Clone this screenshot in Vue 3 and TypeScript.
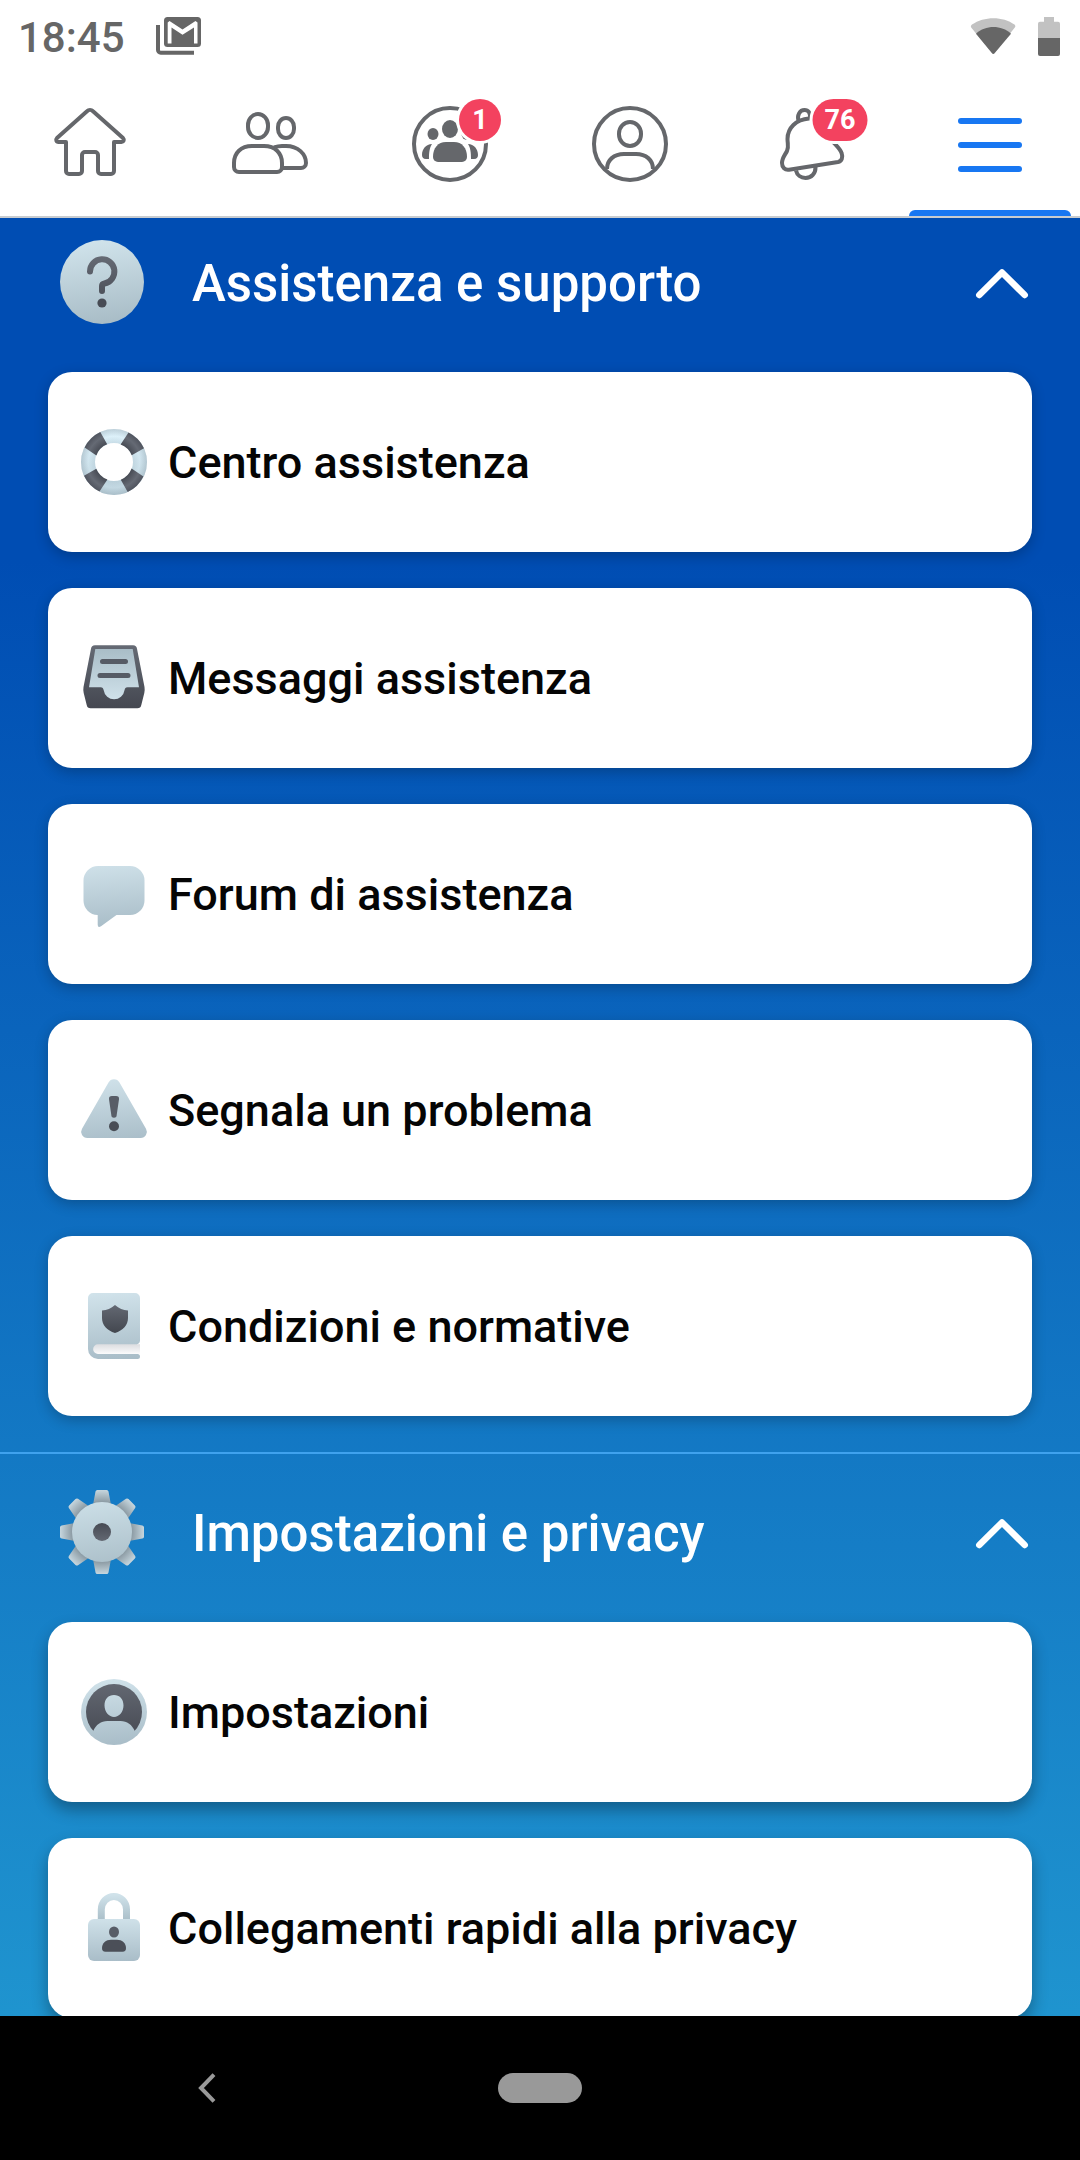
<script setup lang="ts">
import { ref } from 'vue'

interface MenuItem {
  label: string
  icon: string
}

interface MenuSection {
  title: string
  icon: string
  open: boolean
  items: MenuItem[]
}

interface Tab {
  name: string
  icon: string
  badge?: number
}

const tabs: Tab[] = [
  {
    name: 'Home',
    icon: '<path d="M24 46v29a3 3 0 0 0 3 3h10a3 3 0 0 0 3-3V59a3 3 0 0 1 3-3h10a3 3 0 0 1 3 3v16a3 3 0 0 0 3 3h10a3 3 0 0 0 3-3V46h7.500c2.200 0 3-2.400 1.500-4L51 15.200a4.300 4.300 0 0 0-6 0L15 42c-1.500 1.600-.7 4 1.500 4z"/>',
  },
  {
    name: 'Amici',
    icon: '<rect x="26" y="18" width="20" height="24" rx="10" ry="11"/><path d="M12 67c0-10 7-17 18-17h12c11 0 18 7 18 17v4a5 5 0 0 1-5 5H17a5 5 0 0 1-5-5z"/><rect x="56" y="22" width="16" height="20" rx="8" ry="9"/><path d="M52 51.500c3-1.100 5-1.500 8-1.500h4c12 0 20 8 20 17a5 5 0 0 1-5 5H61"/>',
  },
  {
    name: 'Gruppi',
    badge: 1,
    icon: '<circle cx="48" cy="48" r="36"/><g fill="currentColor" stroke="none"><ellipse cx="48" cy="33" rx="8" ry="9"/><ellipse cx="31" cy="38" rx="5.500" ry="6"/><ellipse cx="65" cy="38" rx="5.500" ry="6"/><path d="M31 61c0-9 5-15 13-15h8c8 0 13 6 13 15a5 5 0 0 1-5 5H36a5 5 0 0 1-5-5z"/><path d="M30 48c-2.500 4-3 8-3 15h-3c-3 0-4-2-4-4 0-6 4-11 10-11z"/><path d="M66 48c2.500 4 3 8 3 15h3c3 0 4-2 4-4 0-6-4-11-10-11z"/></g>',
  },
  {
    name: 'Profilo',
    icon: '<circle cx="48" cy="48" r="36"/><rect x="37" y="26" width="22" height="24" rx="11" ry="11.500"/><path d="M25 73c0-9 7-15 17-15h12c10 0 17 6 17 15"/>',
  },
  {
    name: 'Notifiche',
    badge: 76,
    icon: '<path d="M36.500 24.500c-1.500-5 1-10.500 6-10.500 4 0 6 3 5.500 8"/><path d="M47 22.500C34 23.500 25.500 32 25.500 43c0 5 1.500 8-.5 12s-5 7-5 12c0 4.500 3 7.300 7 6.700l49-7.700c4-.8 5-5 3.700-8.500C78.300 53 75 50.500 72 47c-3-4-2-9-4-13-3-8-11-12-21-11.500z"/><path d="M34 74.500c1 4.500 5 7.500 9.500 7.500 6 0 10.200-4.500 10-11"/>',
  },
  {
    name: 'Menu',
    icon: '<g fill="currentColor" stroke="none"><rect x="16" y="22" width="64" height="6" rx="3"/><rect x="16" y="46" width="64" height="6" rx="3"/><rect x="16" y="70" width="64" height="6" rx="3"/></g>',
  },
]

const activeTab = ref('Menu')

const tooth = '<path d="M33 15l2.500-13.400A2 2 0 0 1 37.500 0h9a2 2 0 0 1 2 1.600L51 15z"/>'
const teeth = [0, 45, 90, 135, 180, 225, 270, 315]
  .map((a) => `<g transform="rotate(${a} 42 42)">${tooth}</g>`)
  .join('')

const ringBand = '<path d="M19.300 3A33 33 0 0 0 3.600 18.500L15.400 26.400A19 19 0 0 1 26.200 15.300z"/>'
const ringBands = [0, 90, 180, 270]
  .map((a) => `<g transform="rotate(${a} 33 33)">${ringBand}</g>`)
  .join('')

const sections = ref<MenuSection[]>([
  {
    title: 'Assistenza e supporto',
    open: true,
    icon: '<circle cx="42" cy="42" r="42" fill="url(#light84)"/><path d="M30 31.500A12.200 12.200 0 1 1 44.500 43.500Q42 44 42 46V51" fill="none" stroke="url(#dark84)" stroke-width="6" stroke-linecap="round" stroke-linejoin="round"/><circle cx="42" cy="63" r="4.600" fill="#474b54"/>',
    items: [
      {
        label: 'Centro assistenza',
        icon: `<circle cx="33" cy="33" r="26" fill="none" stroke="url(#ringLight)" stroke-width="14"/><circle cx="33" cy="33" r="26" fill="none" stroke="url(#ringShade)" stroke-width="14"/><g fill="url(#ringDark)">${ringBands}</g>`,
      },
      {
        label: 'Messaggi assistenza',
        icon: '<path d="M14 0.300h38a4 4 0 0 1 4 3.500L63.500 42q.5 3-.2 6l-3 12a4 4 0 0 1-4 3.300H9.700a4 4 0 0 1-4-3.300l-3-12q-.7-3-.2-6L10 3.800a4 4 0 0 1 4-3.500z" fill="url(#dark66)"/><path d="M14.300 4h37.400L58 42.300H46.500c-2 0-2.500 1-3 3a10.500 10.500 0 0 1-20.800 0c-.5-2-1-3-3-3H8z" fill="url(#lightUp)"/><path d="M21.500 16.500h23M19 30.500h28" stroke="#565b65" stroke-width="5" stroke-linecap="round"/>',
      },
      {
        label: 'Forum di assistenza',
        icon: '<path d="M17 5h32a14.500 14.500 0 0 1 14.500 14.500v20A14.500 14.500 0 0 1 49 54H35.500L20 65.300q-3.300 1.700-3.300-1.600V54A14.500 14.500 0 0 1 2.500 39.500v-20A14.500 14.500 0 0 1 17 5z" fill="url(#light66)"/>',
      },
      {
        label: 'Segnala un problema',
        icon: '<path d="M27.500 5.500a6.200 6.200 0 0 1 11 0L65 51.700a6.200 6.200 0 0 1-5.500 9.300h-53A6.200 6.200 0 0 1 1 51.700z" fill="url(#light66)"/><path d="M31 19h4a3 3 0 0 1 3 3.300L35.700 38a2.600 2.600 0 0 1-5.400 0L28 22.300A3 3 0 0 1 31 19z" fill="#585d67"/><circle cx="33" cy="49.300" r="5" fill="#494d56"/>',
      },
      {
        label: 'Condizioni e normative',
        icon: '<path d="M12 0h42a5 5 0 0 1 5 5v43a4 4 0 0 1-3 3.500V61h.5a2.500 2.500 0 0 1 0 5H17A10 10 0 0 1 7 56V5a5 5 0 0 1 5-5z" fill="url(#light66)"/><path d="M17 51.300h42V61H17a4.850 4.850 0 0 1 0-9.700z" fill="url(#pages)"/><path d="M34 12c4 3.500 8 5 13 5.500V25c0 7-5 12.500-13 15-8-2.500-13-8-13-15v-7.500c5-.5 9-2 13-5.500z" fill="url(#shield)"/>',
      },
    ],
  },
  {
    title: 'Impostazioni e privacy',
    open: true,
    icon: `<g fill="url(#toothShade)">${teeth}</g><circle cx="42" cy="42" r="30" fill="url(#light84)"/><circle cx="42" cy="42" r="9" fill="url(#hole)"/>`,
    items: [
      {
        label: 'Impostazioni',
        icon: '<circle cx="33" cy="33" r="33" fill="url(#light66)"/><circle cx="33" cy="33" r="28" fill="url(#dark66)"/><path d="M33 16c5.500 0 9.500 4 9.500 10.500S38 38 33 38s-9.500-5-9.500-11.500S27.500 16 33 16zM12 52.500C15 45.500 20 42 26.500 42h13C46 42 51 45.500 54 52.500 49 59 41 62 33 62S17 59 12 52.500z" fill="url(#light66)"/>',
      },
      {
        label: 'Collegamenti rapidi alla privacy',
        icon: '<path d="M20.300 25V14.500a12.600 13 0 0 1 25.200 0V25" fill="none" stroke="url(#shackle)" stroke-width="7"/><rect x="7" y="24" width="52" height="42" rx="6" fill="url(#lockBody)"/><ellipse cx="33" cy="37" rx="5" ry="5.500" fill="#585d67"/><path d="M21 53c0-5 4-8.300 9-8.300h6c5 0 9 3.300 9 8.300 0 2.500-1 3.700-3.500 3.700h-17c-2.500 0-3.500-1.200-3.500-3.700z" fill="#4b4f58"/>',
      },
    ],
  },
])
</script>

<template>
  <div class="screen">
    <svg class="defs" width="0" height="0" aria-hidden="true">
      <defs>
        <linearGradient id="light66" gradientUnits="userSpaceOnUse" x1="30" y1="0" x2="36" y2="66"><stop stop-color="#d0e2ea" /><stop offset="1" stop-color="#a9bdc8" /></linearGradient>
        <linearGradient id="light84" gradientUnits="userSpaceOnUse" x1="36" y1="0" x2="48" y2="84"><stop stop-color="#d0e3eb" /><stop offset="1" stop-color="#a8bcc6" /></linearGradient>
        <linearGradient id="lightUp" x1="0" y1="0" x2="0" y2="1"><stop stop-color="#a9bdc7" /><stop offset="1" stop-color="#cfe1ea" /></linearGradient>
        <linearGradient id="lockBody" x1="0" y1="0" x2="0" y2="1"><stop stop-color="#cfe1e9" /><stop offset="1" stop-color="#a9bdc8" /></linearGradient>
        <linearGradient id="shackle" gradientUnits="userSpaceOnUse" x1="0" y1="0" x2="0" y2="25"><stop stop-color="#d0e2ea" /><stop offset="1" stop-color="#aabfc9" /></linearGradient>
        <linearGradient id="dark66" gradientUnits="userSpaceOnUse" x1="0" y1="0" x2="0" y2="66"><stop stop-color="#656a74" /><stop offset="1" stop-color="#43464f" /></linearGradient>
        <linearGradient id="dark84" gradientUnits="userSpaceOnUse" x1="0" y1="16" x2="0" y2="66"><stop stop-color="#656a74" /><stop offset="1" stop-color="#474b54" /></linearGradient>
        <linearGradient id="shield" x1="0" y1="0" x2="0" y2="1"><stop stop-color="#636872" /><stop offset="1" stop-color="#43474f" /></linearGradient>
        <linearGradient id="hole" x1="0" y1="0" x2="0" y2="1"><stop stop-color="#464a53" /><stop offset="1" stop-color="#636872" /></linearGradient>
        <linearGradient id="pages" x1="0" y1="0" x2="0" y2="1"><stop stop-color="#dcdde0" /><stop offset="1" stop-color="#fbfbfc" /></linearGradient>
        <radialGradient id="toothShade" gradientUnits="userSpaceOnUse" cx="42" cy="42" r="42"><stop offset=".7" stop-color="#8a99a2" /><stop offset="1" stop-color="#c6d6de" /></radialGradient>
        <radialGradient id="ringLight" gradientUnits="userSpaceOnUse" cx="33" cy="33" r="33"><stop offset=".57" stop-color="#cde2ec" /><stop offset=".78" stop-color="#e0f4fd" /><stop offset="1" stop-color="#bccfd9" /></radialGradient>
        <linearGradient id="ringShade" gradientUnits="userSpaceOnUse" x1="0" y1="0" x2="0" y2="66"><stop stop-color="#8ea5b1" stop-opacity="0" /><stop offset="1" stop-color="#8ea5b1" stop-opacity=".4" /></linearGradient>
        <radialGradient id="ringDark" gradientUnits="userSpaceOnUse" cx="33" cy="33" r="33"><stop offset=".57" stop-color="#484c55" /><stop offset=".82" stop-color="#656a74" /><stop offset="1" stop-color="#50545e" /></radialGradient>
      </defs>
    </svg>

    <header class="status">
      <time class="clock">18:45</time>
      <svg class="mail" width="46" height="38" viewBox="0 0 46 38" aria-hidden="true">
        <path d="M2 8v25a2.700 2.700 0 0 0 2.700 2.700H38" fill="none" stroke="#666" stroke-width="4" />
        <rect x="8" width="37" height="30" rx="3.500" fill="#666" />
        <path d="M11.700 26.500V5.500L13.500 4 26.500 12.500 39.500 4 41.500 5.500V26.500H38V10.500L26.500 17.700 15.500 10.500V26.500z" fill="#fff" />
      </svg>
      <svg class="wifi" width="46" height="38" viewBox="0 0 46 38" aria-hidden="true">
        <path d="M2 7.500C14-1 33-1 44.500 7.500q1.500 1.500.3 3L24.500 36.300q-1.200 1.200-2.400 0L1.200 10.500q-1-1.700.8-3z" fill="#c2c2c2" />
        <path d="M6 16.700C15.500 7.800 31.500 7.800 41 16.700L24.500 36.300q-1.200 1.200-2.400 0z" fill="#666" />
      </svg>
      <svg width="22" height="39" viewBox="0 0 22 39" aria-hidden="true">
        <path d="M6 0h10v4.700h4a2 2 0 0 1 2 2V21H0V6.700a2 2 0 0 1 2-2h4z" fill="#c2c2c2" />
        <path d="M0 21h22v16a2 2 0 0 1-2 2H2a2 2 0 0 1-2-2z" fill="#666" />
      </svg>
    </header>

    <nav class="tabs">
      <button
        v-for="tab in tabs"
        :key="tab.name"
        type="button"
        class="tab"
        :class="{ active: tab.name === activeTab }"
        :aria-label="tab.name"
        @click="activeTab = tab.name"
      >
        <span class="glyph">
          <svg
            width="96"
            height="96"
            viewBox="0 0 96 96"
            fill="none"
            stroke="currentColor"
            stroke-width="4"
            stroke-linejoin="round"
            aria-hidden="true"
            v-html="tab.icon"
          />
          <span v-if="tab.badge" class="badge">{{ tab.badge }}</span>
        </span>
      </button>
    </nav>

    <main class="content">
      <section v-for="section in sections" :key="section.title" class="group">
        <h2 class="heading">
          <button type="button" class="toggle" :aria-expanded="section.open" @click="section.open = !section.open">
            <svg class="emblem" width="84" height="84" viewBox="0 0 84 84" aria-hidden="true" v-html="section.icon" />
            <span class="title">{{ section.title }}</span>
            <svg class="chevron" :class="{ closed: !section.open }" width="60" height="36" viewBox="0 0 60 36" aria-hidden="true">
              <path d="M7.300 29L30 6.500 52.700 29" fill="none" stroke="#fff" stroke-width="6.500" stroke-linecap="round" stroke-linejoin="round" />
            </svg>
          </button>
        </h2>
        <ul v-if="section.open" class="cards">
          <li v-for="item in section.items" :key="item.label">
            <button type="button" class="card">
              <svg class="icon" width="66" height="66" viewBox="0 0 66 66" aria-hidden="true" v-html="item.icon" />
              <span class="label">{{ item.label }}</span>
            </button>
          </li>
        </ul>
      </section>
    </main>

    <footer class="system">
      <button type="button" class="back" aria-label="Indietro">
        <svg width="18" height="30" viewBox="0 0 18 30" aria-hidden="true">
          <path d="M16 1.700L3 15l13 13.300" fill="none" stroke="#999" stroke-width="4" />
        </svg>
      </button>
      <button type="button" class="pill" aria-label="Schermata Home"></button>
    </footer>
  </div>
</template>

<style>
body {
  margin: 0;
}
</style>

<style scoped>
.screen {
  display: flex;
  flex-direction: column;
  height: 100vh;
  background: #fff;
  font-family: Roboto, 'Liberation Sans', sans-serif;
}

.defs {
  position: absolute;
}

button {
  margin: 0;
  padding: 0;
  border: 0;
  background: none;
  color: inherit;
  font: inherit;
  text-align: left;
  cursor: pointer;
}

svg {
  display: block;
  flex: none;
}

.status {
  display: flex;
  align-items: center;
  flex: none;
  height: 72px;
  padding: 0 20px 0 18px;
  color: #666;
}

.clock {
  padding-top: 4px;
  font-size: 42px;
  font-weight: 500;
  line-height: 48px;
}

.mail {
  margin-left: 31px;
}

.wifi {
  margin: 0 22px 0 auto;
}

.tabs {
  display: flex;
  flex: none;
  height: 144px;
  border-bottom: 2px solid #c8ccd0;
}

.tab {
  position: relative;
  display: flex;
  flex: 1;
  align-items: center;
  justify-content: center;
  color: #65676b;
}

.tab.active {
  color: #1877f2;
}

.tab.active::after {
  content: '';
  position: absolute;
  right: 9px;
  bottom: 0;
  left: 9px;
  height: 6px;
  border-radius: 6px 6px 0 0;
  background: #1877f2;
}

.glyph {
  position: relative;
}

.badge {
  position: absolute;
  top: 3px;
  left: 78px;
  box-sizing: border-box;
  min-width: 42px;
  padding: 0 12px;
  border-radius: 21px;
  background: #f3425f;
  box-shadow: 0 0 0 3px #fff;
  color: #fff;
  font-size: 27px;
  font-weight: 700;
  line-height: 42px;
  text-align: center;
  transform: translateX(-50%);
}

.content {
  flex: 1;
  min-height: 0;
  overflow: hidden auto;
  scrollbar-width: none;
  background: linear-gradient(#004db3 19%, #1f94cf);
}

.group + .group {
  border-top: 2px solid #3fa2ee;
}

.heading {
  margin: 0;
  padding: 36px 48px 44px 60px;
}

.group:first-child .heading {
  padding-top: 22px;
}

.toggle {
  display: flex;
  align-items: center;
  width: 100%;
  height: 88px;
}

.emblem {
  align-self: flex-start;
}

.title {
  flex: 1;
  margin-left: 48px;
  color: #fff;
  font-size: 51px;
  font-weight: 500;
  line-height: 60px;
}

.chevron.closed {
  transform: rotate(180deg);
}

.cards {
  display: flex;
  flex-direction: column;
  gap: 36px;
  margin: 0;
  padding: 0 48px 36px;
  list-style: none;
}

.card {
  display: flex;
  align-items: center;
  gap: 21px;
  width: 100%;
  height: 180px;
  padding: 0 33px;
  border-radius: 24px;
  background: #fff;
  box-shadow: 0 4px 14px rgba(0, 0, 0, 0.24);
  color: #050505;
  font-size: 45px;
  font-weight: 500;
  line-height: 54px;
}

.group + .group .card {
  box-shadow: 0 8px 16px rgba(0, 0, 0, 0.32);
}

.icon {
  overflow: visible;
}

.label {
  padding-top: 2px;
}

.system {
  display: grid;
  grid-template-columns: 1fr auto 1fr;
  align-items: center;
  flex: none;
  height: 144px;
  background: #000;
}

.back {
  display: flex;
  justify-content: center;
  width: 54px;
  margin-left: 180px;
  padding: 24px 0;
}

.pill {
  width: 84px;
  height: 30px;
  border-radius: 15px;
  background: #999;
}
</style>
